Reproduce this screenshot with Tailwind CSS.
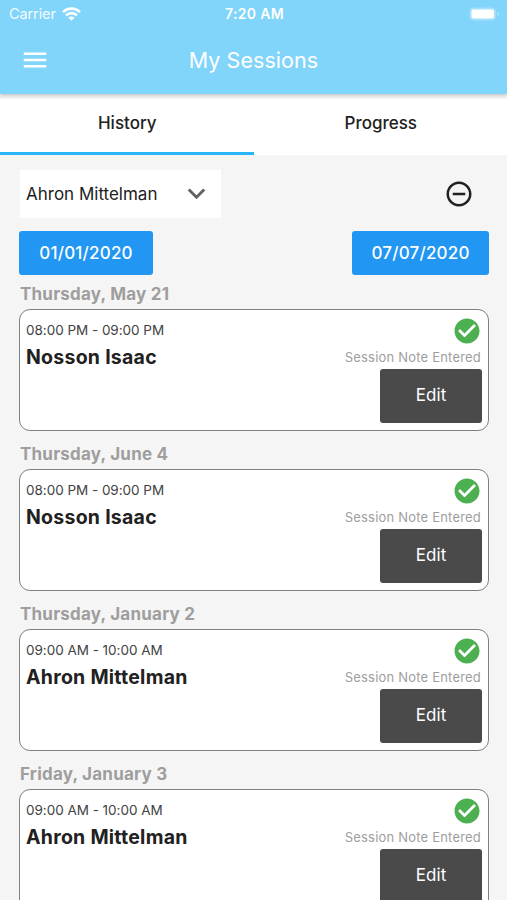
<!DOCTYPE html>
<html lang="en">
<head>
<meta charset="utf-8">
<title>My Sessions</title>
<script src="https://cdn.jsdelivr.net/npm/@tailwindcss/browser@4"></script>
</head>
<body class="w-[507px] h-[900px] overflow-hidden bg-[#f5f5f5] font-['Inter','Liberation_Sans',sans-serif] text-[#212121]">
<div class="flex h-[900px] flex-col overflow-hidden">
  <header class="z-10 h-[94px] shrink-0 bg-[#81d4fa] text-white shadow-[0_1px_4px_rgba(0,0,0,0.25)]">
    <div class="grid h-[27px] grid-cols-3 items-center pl-[9px] pr-[7px]">
      <div class="flex items-center gap-[6px]">
        <span class="text-[14.500px] leading-[27px] tracking-[-0.1px] text-white/90">Carrier</span>
        <svg class="h-[14px] w-[19px]" viewBox="0 0 19 14" fill="none" stroke="#fff" stroke-width="2.6"><path d="M1 5.2a12 12 0 0 1 17 0M4 8.4a7.8 7.8 0 0 1 11 0"/><path d="M9.500 13.800 6.400 10.700a4.400 4.400 0 0 1 6.200 0z" fill="#fff" stroke="none"/></svg>
      </div>
      <span class="text-center text-[14px] font-semibold leading-[27px] tracking-[0.3px]">7:20 AM</span>
      <svg class="h-[14px] w-[31px] justify-self-end" viewBox="0 0 31 14"><rect x=".5" y=".5" width="26.500" height="13" rx="4" fill="#a5e0fb"/><rect x="2.500" y="2.500" width="22.500" height="9" rx="2" fill="#fff"/><path d="M28.500 5v4q1.500-.5 1.500-2t-1.500-2" fill="#b7e6fc"/></svg>
    </div>
    <div class="grid h-[66px] grid-cols-[60px_1fr_60px] items-center">
      <svg class="ml-[20px] size-[30px]" viewBox="0 0 24 24" fill="#fff"><path d="M3 18h18v-2H3v2zm0-5h18v-2H3v2zm0-7v2h18V6H3z"/></svg>
      <h1 class="text-center text-[21.500px] leading-[30px] tracking-[0.05px]">My Sessions</h1>
    </div>
  </header>
  <nav class="mt-[5px] grid h-[56px] shrink-0 grid-cols-2 bg-white text-center text-[17px] font-medium leading-[49px]">
    <div class="border-b-[3px] border-[#29b6f6] pl-px">History</div>
    <div class="pl-px">Progress</div>
  </nav>
  <main class="flex flex-col px-[19px] pt-[15px]">
    <div class="flex h-[48px] items-center justify-between pr-[14px]">
      <div class="ml-px flex h-[48px] w-[201px] items-center justify-between bg-white pl-[6px] pr-[7px]">
        <span class="whitespace-nowrap pt-[2px] text-[17px]">Ahron Mittelman</span>
        <svg class="mb-[2px] size-[35px]" viewBox="0 0 24 24" fill="#616161"><path d="M16.590 8.590 12 13.170 7.410 8.590 6 10l6 6 6-6z"/></svg>
      </div>
      <svg class="size-[30px]" viewBox="0 0 24 24" fill="#212121"><path d="M7 11v2h10v-2H7zm5-9C6.480 2 2 6.480 2 12s4.480 10 10 10 10-4.480 10-10S17.520 2 12 2zm0 18c-4.410 0-8-3.590-8-8s3.590-8 8-8 8 3.590 8 8-3.590 8-8 8z"/></svg>
    </div>
    <div class="-mr-px mt-[13px] flex justify-between text-center text-[17px] font-medium leading-[44px] tracking-[0.2px] text-white">
      <button class="h-[44px] w-[134px] rounded-[3px] bg-[#2196f3]">01/01/2020</button>
      <button class="h-[44px] w-[137px] rounded-[3px] bg-[#2196f3]">07/07/2020</button>
    </div>
    <div id="sessions" class="-mr-px flex flex-col"></div>
  </main>
</div>
<template id="session">
  <section>
    <h2 class="h-[34px] pl-px text-[17px] font-bold leading-[38px] tracking-[0.22px] text-[#9e9e9e]"></h2>
    <article class="mb-[4px] flex h-[122px] justify-between rounded-[11px] border border-[#808080] bg-white pl-[6px] pr-[6px] pt-[5.500px]">
      <div class="pt-[3.500px]">
        <p class="time text-[13.500px] leading-[23px] tracking-[-0.03px] text-[#424242]"></p>
        <p class="name text-[19.500px] font-bold leading-[30px] tracking-[0.25px]"></p>
      </div>
      <div class="flex flex-col items-end">
        <svg class="size-[30px]" viewBox="0 0 24 24" fill="#4caf50"><path d="M12 2C6.480 2 2 6.480 2 12s4.480 10 10 10 10-4.480 10-10S17.520 2 12 2zm-2 15-5-5 1.410-1.410L10 14.170l7.590-7.590L19 8l-9 9z"/><path fill="#fff" d="m10 17-5-5 1.410-1.410L10 14.170l7.590-7.590L19 8z"/></svg>
        <span class="pr-px text-[13px] leading-[23px] tracking-[0.2px] text-[#9e9e9e]">Session Note Entered</span>
        <button class="h-[54px] w-[102px] rounded-[3px] bg-[#4a4a4a] text-[17px] tracking-[0.1px] text-white">Edit</button>
      </div>
    </article>
  </section>
</template>
<script>
  const sessions = [
    ["Thursday, May 21", "08:00 PM - 09:00 PM", "Nosson Isaac"],
    ["Thursday, June 4", "08:00 PM - 09:00 PM", "Nosson Isaac"],
    ["Thursday, January 2", "09:00 AM - 10:00 AM", "Ahron Mittelman"],
    ["Friday, January 3", "09:00 AM - 10:00 AM", "Ahron Mittelman"]
  ];
  for (const [date, time, name] of sessions) {
    const row = document.getElementById("session").content.cloneNode(true);
    row.querySelector("h2").textContent = date;
    row.querySelector(".time").textContent = time;
    row.querySelector(".name").textContent = name;
    document.getElementById("sessions").append(row);
  }
</script>
</body>
</html>
